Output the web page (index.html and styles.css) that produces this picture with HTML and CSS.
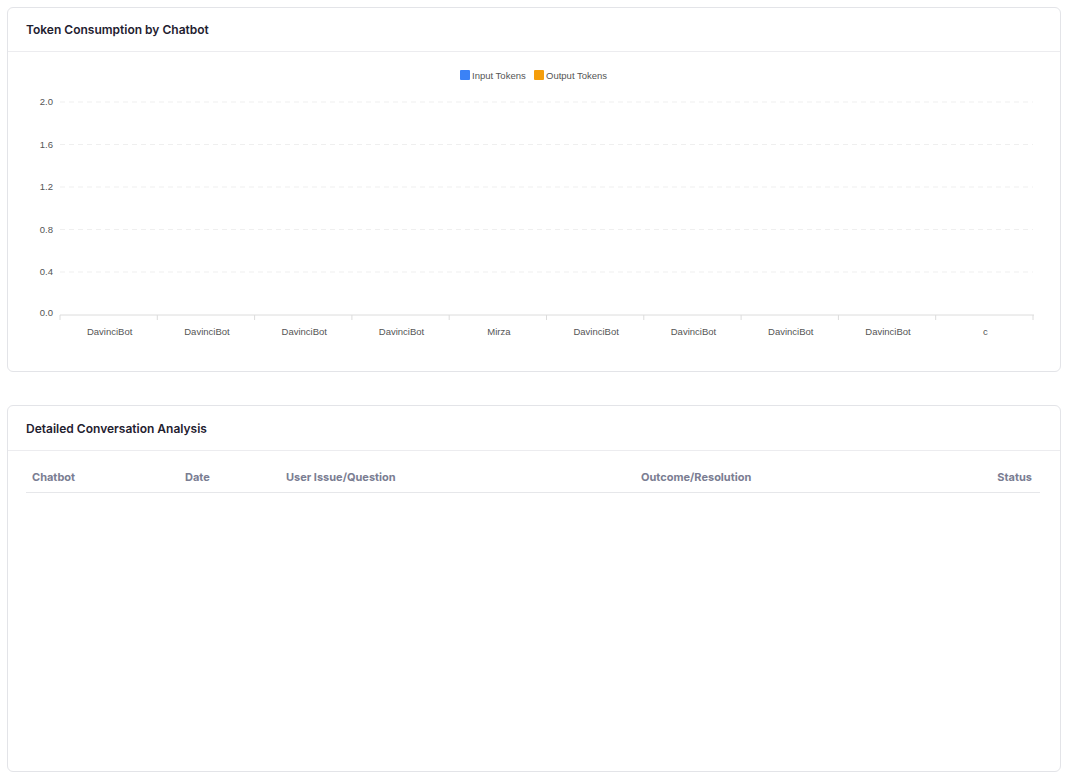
FILE: index.html
```html
<!DOCTYPE html>
<html lang="en">
<head>
    <meta charset="UTF-8">
    <meta name="viewport" content="width=device-width, initial-scale=1.0">
    <title>Chatbot Analytics</title>
    <link rel="stylesheet" href="styles.css">
</head>
<body>

    <div class="page">

        <div class="card chart-card">
            <div class="card-header">
                <h2>Token Consumption by Chatbot</h2>
            </div>
            <div class="card-body">
                <svg class="chart" width="1052" height="320" viewBox="0 0 1052 320">
                    <!-- legend -->
                    <rect x="452" y="18" width="10" height="10" rx="1" fill="#3b82f6"/>
                    <text class="legend" x="464" y="27">Input Tokens</text>
                    <rect x="526" y="18" width="10" height="10" rx="1" fill="#f59e0b"/>
                    <text class="legend" x="538" y="27">Output Tokens</text>

                    <!-- grid -->
                    <g class="grid">
                        <line x1="52" y1="50" x2="1025" y2="50"/>
                        <line x1="52" y1="92.5" x2="1025" y2="92.5"/>
                        <line x1="52" y1="135" x2="1025" y2="135"/>
                        <line x1="52" y1="177.5" x2="1025" y2="177.5"/>
                        <line x1="52" y1="220" x2="1025" y2="220"/>
                    </g>
                    <line class="axis" x1="52" y1="263" x2="1026" y2="263"/>
                    <g class="axis" id="ticks"></g>

                    <g class="ylabels">
                        <text x="45" y="53">2.0</text>
                        <text x="45" y="95.5">1.6</text>
                        <text x="45" y="138">1.2</text>
                        <text x="45" y="180.5">0.8</text>
                        <text x="45" y="223">0.4</text>
                        <text x="45" y="264">0.0</text>
                    </g>
                    <g class="xlabels" id="xlabels"></g>
                </svg>
            </div>
        </div>

        <div class="card table-card">
            <div class="card-header">
                <h2>Detailed Conversation Analysis</h2>
            </div>
            <div class="table-wrap">
                <table>
                    <thead>
                        <tr>
                            <th class="col-bot">Chatbot</th>
                            <th class="col-date">Date</th>
                            <th class="col-issue">User Issue/Question</th>
                            <th class="col-outcome">Outcome/Resolution</th>
                            <th class="col-status">Status</th>
                        </tr>
                    </thead>
                    <tbody></tbody>
                </table>
            </div>
        </div>

    </div>

    <script>
        var bots = ["DavinciBot", "DavinciBot", "DavinciBot", "DavinciBot", "Mirza",
                    "DavinciBot", "DavinciBot", "DavinciBot", "DavinciBot", "c"];
        var ns = "http://www.w3.org/2000/svg";
        var left = 52;
        var step = 97.3;

        var ticks = document.getElementById("ticks");
        var labels = document.getElementById("xlabels");

        for (var i = 0; i <= bots.length; i++) {
            var t = document.createElementNS(ns, "line");
            var x = left + i * step;
            t.setAttribute("x1", x);
            t.setAttribute("x2", x);
            t.setAttribute("y1", 263);
            t.setAttribute("y2", 268);
            ticks.appendChild(t);

            if (i < bots.length) {
                var txt = document.createElementNS(ns, "text");
                txt.setAttribute("x", x + step / 2 + 1);
                txt.setAttribute("y", 283);
                txt.textContent = bots[i];
                labels.appendChild(txt);
            }
        }
    </script>

</body>
</html>
```

FILE: styles.css
```css
body {
    margin: 0;
    padding: 0;
    background-color: #fff;
    font-family: Inter, "Noto Sans", sans-serif;
}

.page {
    display: flex;
    flex-direction: column;
    gap: 33px;
    padding: 7px 12px 4px 7px;
}

.card {
    background-color: #fff;
    border: 1px solid #e3e4e8;
    border-radius: 6px;
}

.card-header {
    height: 43px;
    display: flex;
    align-items: center;
    padding: 0 18px;
    border-bottom: 1px solid #ececef;
}

.card-header h2 {
    margin: 0;
    font-size: 12px;
    font-weight: 600;
    color: #1f2130;
}

.chart-card {
    height: 363px;
}

.card-body {
    height: 319px;
}

.chart {
    display: block;
    font-family: "Liberation Sans", Arial, sans-serif;
}

.legend {
    font-size: 9.5px;
    fill: #555;
}

.grid line {
    stroke: #efefef;
    stroke-width: 1;
    stroke-dasharray: 5 4;
}

.axis,
.axis line {
    stroke: #dcdcdc;
    stroke-width: 1;
}

.ylabels text {
    font-size: 9.5px;
    fill: #555;
    text-anchor: end;
}

.xlabels text {
    font-size: 9.5px;
    fill: #555;
    text-anchor: middle;
}

.table-card {
    height: 365px;
}

.table-card .card-header {
    height: 44px;
}

.table-wrap {
    padding: 14px 20px 0 18px;
}

table {
    width: 100%;
    border-collapse: collapse;
}

th {
    font-size: 11px;
    font-weight: 700;
    color: #7a7d92;
    text-align: left;
    padding: 5px 6px 8px 6px;
    border-bottom: 1px solid #e6e7ea;
}

.col-bot {
    width: 141px;
}

.col-date {
    width: 89px;
}

.col-issue {
    width: 343px;
}

.col-status {
    text-align: right;
    padding-right: 8px;
}
```
